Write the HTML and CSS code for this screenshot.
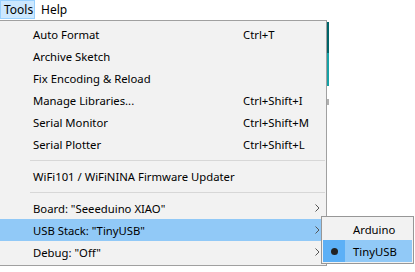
FILE: index.html
```html
<!DOCTYPE html>
<html lang="en">
<head>
    <meta charset="UTF-8">
    <title>Tools menu</title>
    <link rel="stylesheet" href="styles.css">
</head>
<body>

    <div class="menubar">
        <span class="menubar-item open">Tools</span>
        <span class="menubar-item">Help</span>
    </div>

    <div class="screen">
        <div class="menu">
            <div class="item"><span class="label">Auto Format</span><span class="key">Ctrl+T</span></div>
            <div class="item"><span class="label">Archive Sketch</span></div>
            <div class="item"><span class="label">Fix Encoding &amp; Reload</span></div>
            <div class="item"><span class="label">Manage Libraries...</span><span class="key">Ctrl+Shift+I</span></div>
            <div class="item"><span class="label">Serial Monitor</span><span class="key">Ctrl+Shift+M</span></div>
            <div class="item"><span class="label">Serial Plotter</span><span class="key">Ctrl+Shift+L</span></div>
            <div class="sep"></div>
            <div class="item"><span class="label">WiFi101 / WiFiNINA Firmware Updater</span></div>
            <div class="sep"></div>
            <div class="item sub"><span class="label">Board: "Seeeduino XIAO"</span><svg class="arrow" width="5" height="8" viewBox="0 0 5 8"><polyline points="0.5,0.5 4,4 0.5,7.5" fill="none" stroke="#555" stroke-width="1"/></svg></div>
            <div class="item sub active"><span class="label">USB Stack: "TinyUSB"</span><svg class="arrow" width="5" height="8" viewBox="0 0 5 8"><polyline points="0.5,0.5 4,4 0.5,7.5" fill="none" stroke="#555" stroke-width="1"/></svg></div>
            <div class="item sub"><span class="label">Debug: "Off"</span><svg class="arrow" width="5" height="8" viewBox="0 0 5 8"><polyline points="0.5,0.5 4,4 0.5,7.5" fill="none" stroke="#555" stroke-width="1"/></svg></div>
        </div>

        <div class="backdrop">
            <div class="strip dark"></div>
            <div class="strip light"></div>
            <div class="strip gray"></div>
        </div>

        <div class="submenu">
            <div class="subitem"><span class="check"></span><span class="label">Arduino</span></div>
            <div class="subitem active"><span class="check"><span class="dot"></span></span><span class="label">TinyUSB</span></div>
        </div>
    </div>

</body>
</html>
```

FILE: styles.css
```css
body {
    margin: 0;
    background-color: #fff;
    font-family: "Noto Sans", sans-serif;
    font-size: 11.3px;
    color: #000;
    overflow: hidden;
}

.menubar {
    display: flex;
    height: 20px;
    background-color: #fff;
}

.menubar-item {
    height: 19px;
    line-height: 18px;
    padding: 0 4px;
    margin-right: 1px;
    border: 1px solid transparent;
    box-sizing: border-box;
    font-size: 12px;
}

.menubar-item.open {
    width: 35px;
    background-color: #cce8ff;
    border-color: #99d1ff;
    padding-left: 3px;
}

.screen {
    position: relative;
    display: flex;
    align-items: flex-start;
}

.menu {
    width: 326px;
    margin-left: -1px;
    padding: 2px 0;
    background-color: #f2f2f2;
    border: 1px solid #a0a0a0;
}

.item {
    display: flex;
    align-items: center;
    height: 22px;
    padding-left: 33px;
}

.item .label {
    width: 210px;
    white-space: nowrap;
}

.item.active {
    background-color: #91c9f7;
}

.item .arrow {
    margin-left: auto;
    margin-right: 6px;
}

.sep {
    height: 10px;
    display: flex;
    align-items: center;
    padding-left: 30px;
}

.sep::after {
    content: "";
    flex: 1;
    height: 1px;
    margin-right: 1px;
    background-color: #d7d7d7;
}

.backdrop {
    display: flex;
    flex-direction: column;
    width: 2px;
    padding-top: 2px;
}

.strip.dark {
    height: 31px;
    background-color: #006468;
}

.strip.light {
    height: 33px;
    background-color: #17a1a5;
}

.strip.gray {
    height: 6px;
    margin-top: 13px;
    background-color: #b0b0b0;
}

.submenu {
    position: absolute;
    left: 321px;
    top: 196px;
    width: 89px;
    padding: 1px;
    background-color: #f2f2f2;
    border: 1px solid #979797;
}

.subitem {
    display: flex;
    align-items: center;
    height: 22px;
}

.subitem .check {
    width: 22px;
    height: 100%;
    display: flex;
    align-items: center;
    justify-content: center;
}

.subitem .label {
    padding-left: 8px;
}

.subitem.active {
    background-color: #91c9f7;
}

.subitem.active .check {
    background-color: #5cb0f6;
}

.dot {
    width: 7px;
    height: 7px;
    border-radius: 50%;
    background-color: #222;
}
```
